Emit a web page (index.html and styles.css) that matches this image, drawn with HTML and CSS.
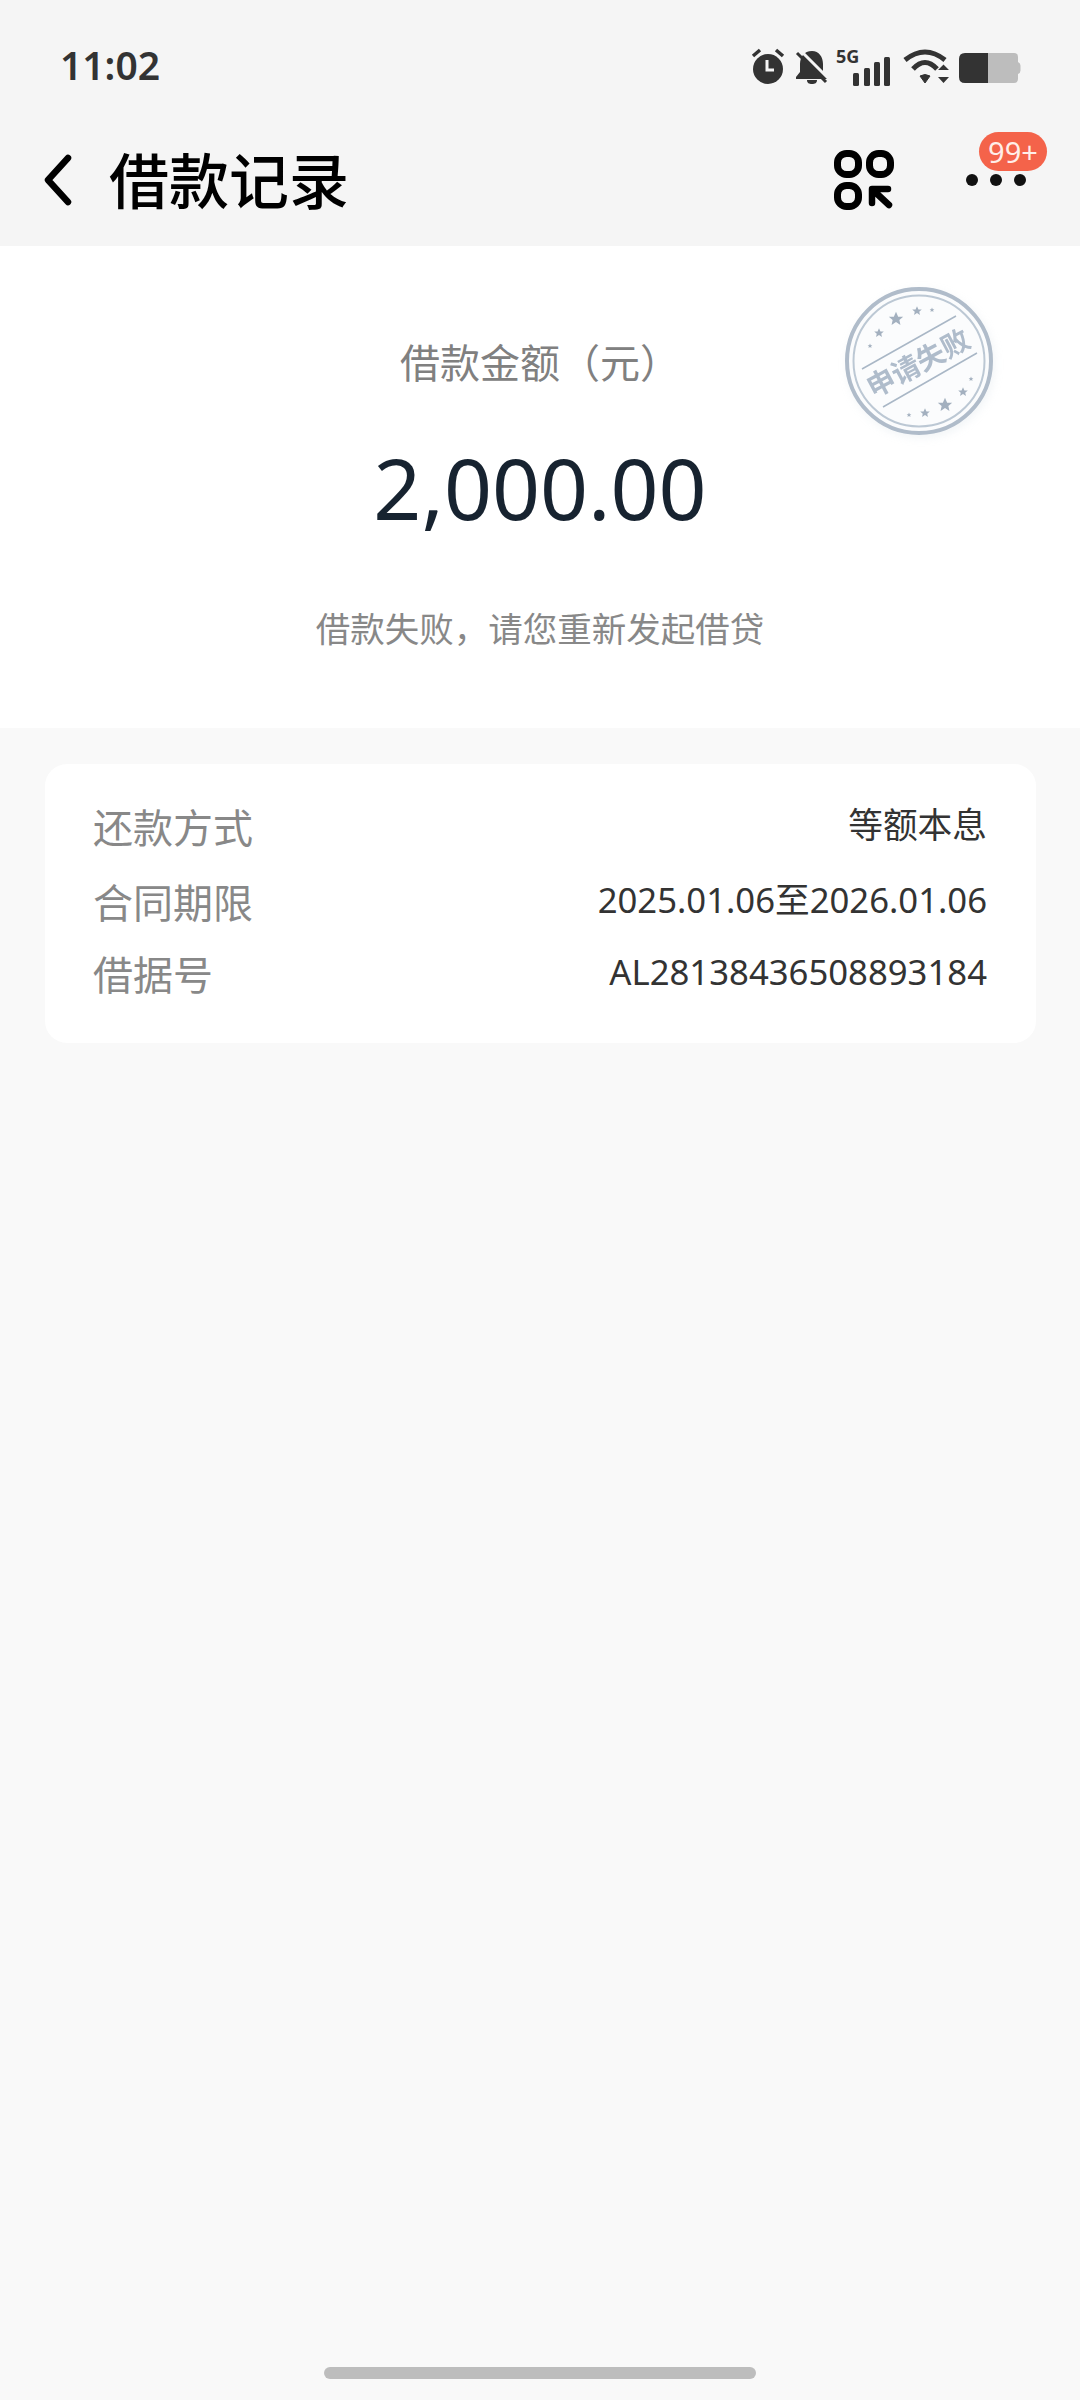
FILE: index.html
```html
<!DOCTYPE html>
<html lang="zh-CN">
<head>
    <meta charset="UTF-8">
    <meta name="viewport" content="width=device-width, initial-scale=1.0">
    <title>借款记录</title>
    <link rel="stylesheet" href="styles.css">
</head>
<body>
    <header class="top">
        <div class="status">
            <span class="time">11:02</span>
            <svg class="status-icons" viewBox="750 45 272 45" width="272" height="45">
                <!-- alarm -->
                <circle cx="768" cy="69" r="15" fill="#333"/>
                <path d="M753 56l7-6M783 56l-7-6" stroke="#333" stroke-width="3.5" fill="none"/>
                <path d="M767 60v10h7" stroke="#f5f5f5" stroke-width="3" fill="none"/>
                <!-- bell off -->
                <path d="M812 51c-8 0-12 6-12 13v8l-4 5v2h31v-2l-4-5v-8c0-7-4-13-11-13zM807 80c0 3 2 4 5 4s5-1 5-4z" fill="#333"/>
                <path d="M800 50l29 29" stroke="#f5f5f5" stroke-width="3" fill="none"/>
                <path d="M797 53l29 29" stroke="#333" stroke-width="3" fill="none"/>
                <!-- 5G + signal -->
                <text x="836" y="63" class="net">5G</text>
                <rect x="853" y="73" width="6" height="13" rx="1.5" fill="#333"/>
                <rect x="864" y="68" width="6" height="18" rx="1.5" fill="#333"/>
                <rect x="874" y="62" width="6" height="24" rx="1.5" fill="#333"/>
                <rect x="884" y="57" width="6" height="29" rx="1.5" fill="#333"/>
                <!-- wifi -->
                <path d="M905 60Q925 44 945 60M913 69Q925 56 937 69" stroke="#333" stroke-width="5" fill="none"/>
                <path d="M920 76Q925 73 930 76L925 83z" fill="#333" stroke="#333" stroke-linejoin="round"/>
                <path d="M938 70h11l-5.500-5.500zM938 77h11l-5.500 6z" fill="#333"/>
                <!-- battery -->
                <path d="M988 53h26q4 0 4 4v5q2.500 1 2.500 3.500v5q0 2.500-2.500 3.500v5q0 4-4 4h-26z" fill="#bdbdbd"/>
                <path d="M965 53h23v30h-23q-6 0-6-6v-18q0-6 6-6z" fill="#333"/>
            </svg>
        </div>
        <nav class="nav">
            <svg class="back" viewBox="0 0 36 60" width="36" height="60">
                <path d="M28 8L8 30l20 22" stroke="#000" stroke-width="6.500" stroke-linecap="round" stroke-linejoin="round" fill="none"/>
            </svg>
            <h1 class="title">借款记录</h1>
            <svg class="scan" viewBox="0 0 60 60" width="60" height="60">
                <rect x="3.500" y="3.500" width="21" height="21" rx="9" stroke="#000" stroke-width="7" fill="none"/>
                <rect x="35.500" y="3.500" width="21" height="21" rx="9" stroke="#000" stroke-width="7" fill="none"/>
                <rect x="3.500" y="35.500" width="21" height="21" rx="9" stroke="#000" stroke-width="7" fill="none"/>
                <path d="M38 53V39h16M40 41l15 14" stroke="#000" stroke-width="6.500" stroke-linecap="round" stroke-linejoin="round" fill="none"/>
            </svg>
            <div class="more">
                <span class="dot"></span><span class="dot"></span><span class="dot"></span>
                <span class="badge">99+</span>
            </div>
        </nav>
    </header>

    <section class="hero">
        <p class="hero-label">借款金额（元）</p>
        <p class="amount">2,000.00</p>
        <p class="hero-note">借款失败，请您重新发起借贷</p>
        <svg class="stamp" viewBox="0 0 180 180" width="180" height="180">
            <defs>
                <polygon id="star" points="0,-6 1.800,-1.900 6,-1.800 2.800,0.800 3.700,5 0,2.600 -3.700,5 -2.800,0.800 -6,-1.800 -1.800,-1.900"/>
            </defs>
            <circle cx="99" cy="91" r="72" fill="#fbfcfd" stroke="#b0bcca" stroke-width="4"/>
            <circle cx="99" cy="91" r="65.500" fill="none" stroke="#bcc8d4" stroke-width="2"/>
            <path d="M42 99L136 46M63 137L157 83" stroke="#a9b7c6" stroke-width="1.500"/>
            <g fill="#a3b0bf">
                <use href="#star" transform="translate(50 76) scale(.4)"/>
                <use href="#star" transform="translate(59 63) scale(.8)"/>
                <use href="#star" transform="translate(76 49) scale(1.200)"/>
                <use href="#star" transform="translate(97 41) scale(.8)"/>
                <use href="#star" transform="translate(112 40) scale(.4)"/>
                <use href="#star" transform="translate(89 145) scale(.4)"/>
                <use href="#star" transform="translate(105 143) scale(.8)"/>
                <use href="#star" transform="translate(125 135) scale(1.200)"/>
                <use href="#star" transform="translate(143 122) scale(.8)"/>
                <use href="#star" transform="translate(151 109) scale(.4)"/>
            </g>
            <text class="stamp-text" x="0" y="0" text-anchor="middle" transform="translate(103 102) rotate(-28)">申请失败</text>
        </svg>
    </section>

    <section class="card">
        <div class="row">
            <span class="row-label">还款方式</span>
            <span class="row-value">等额本息</span>
        </div>
        <div class="row">
            <span class="row-label">合同期限</span>
            <span class="row-value">2025.01.06至2026.01.06</span>
        </div>
        <div class="row">
            <span class="row-label">借据号</span>
            <span class="row-value">AL28138436508893184</span>
        </div>
    </section>

    <div class="home-bar"></div>
</body>
</html>
```

FILE: styles.css
```css
*{
    box-sizing: border-box;
}
html, body{
    margin: 0;
    padding: 0;
}
body{
    width: 1080px;
    height: 2400px;
    display: flex;
    flex-direction: column;
    background: #f9f9f9;
    font-family: "Noto Sans", "Noto Sans CJK SC", sans-serif;
    overflow: hidden;
}
p{
    margin: 0;
}

.top{
    height: 246px;
    background: #f5f5f5;
    padding-top: 45px;
}
.status{
    height: 45px;
    display: flex;
    align-items: center;
    justify-content: space-between;
    padding: 0 58px 0 60px;
}
.time{
    margin-bottom: 6px;
    font-size: 39px;
    font-weight: 600;
    color: #333;
    line-height: 45px;
}
.net{
    font-family: "Noto Sans", sans-serif;
    font-size: 18px;
    font-weight: 700;
    fill: #333;
}
.nav{
    height: 66px;
    margin-top: 57px;
    display: flex;
    align-items: center;
    padding: 0 54px 0 40px;
}
.back{
    flex: none;
}
.title{
    margin: 0 0 0 33px;
    padding-top: 2px;
    font-size: 60px;
    font-weight: 500;
    line-height: 66px;
    color: #000;
    flex: 1;
}
.scan{
    flex: none;
}
.more{
    position: relative;
    width: 60px;
    margin-left: 72px;
    display: flex;
    justify-content: space-between;
}
.dot{
    width: 12px;
    height: 12px;
    border-radius: 50%;
    background: #111;
}
.badge{
    position: absolute;
    left: 13px;
    top: -42px;
    width: 68px;
    height: 39px;
    border-radius: 20px;
    background: #f4634a;
    color: #ffeee9;
    font-size: 29px;
    line-height: 39px;
    text-align: center;
}

.hero{
    position: relative;
    height: 482px;
    background: #fff;
    padding-top: 88px;
    text-align: center;
}
.hero-label{
    font-size: 40px;
    line-height: 58px;
    color: #808080;
}
.amount{
    margin-top: 46px;
    font-size: 84px;
    line-height: 100px;
    color: #172330;
}
.hero-note{
    margin-top: 67px;
    font-size: 34.5px;
    line-height: 48px;
    color: #888;
}
.stamp{
    position: absolute;
    left: 820px;
    top: 24px;
    filter: blur(.4px) drop-shadow(2px 3px 4px rgba(170,185,200,.15));
}
.stamp-text{
    font-size: 28px;
    font-weight: 700;
    fill: #afbccb;
}

.card{
    margin: 36px 44px 0 45px;
    height: 279px;
    padding: 38px 49px 0 48px;
    background: #fff;
    border-radius: 22px;
}
.row{
    display: flex;
    justify-content: space-between;
    height: 72px;
}
.row:first-child{
    height: 75px;
}
.row-label{
    font-size: 40px;
    line-height: 52px;
    color: #888;
}
.row-value{
    font-size: 34.7px;
    line-height: 46px;
    color: #333;
}

.home-bar{
    width: 432px;
    height: 12px;
    margin: auto auto 21px;
    border-radius: 6px;
    background: #bdbdbd;
}
```
